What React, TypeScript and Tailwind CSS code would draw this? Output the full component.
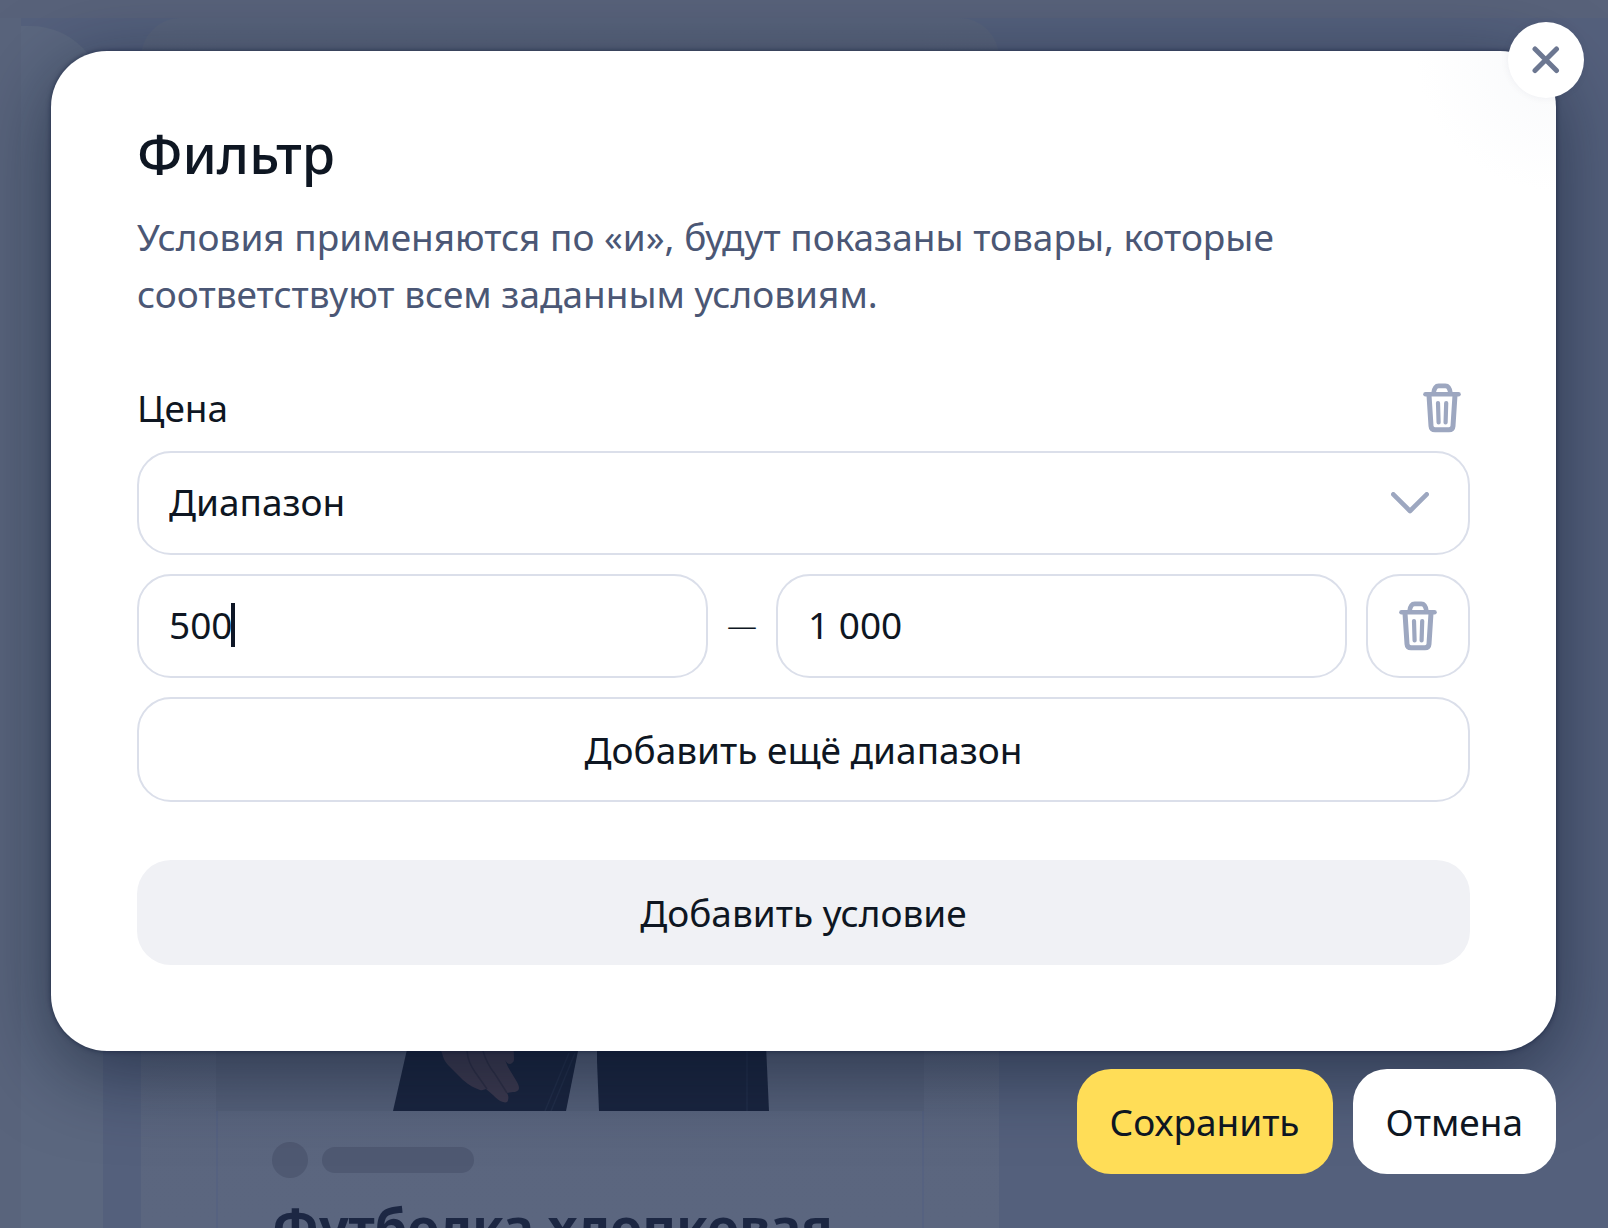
import { useId, useState } from 'react';
import { clsx } from 'clsx';

const fieldClass = 'h-[104px] rounded-[34px] border-2 border-[#dbdfea] bg-white';
const buttonClass = 'h-[105px] rounded-[34px] cursor-pointer text-[37px] leading-none';

function TrashIcon() {
  return (
    <svg
      className="h-[50px] w-[38px]"
      viewBox="0 0 38 50"
      fill="none"
      stroke="currentColor"
      strokeLinecap="round"
      strokeLinejoin="round"
      aria-hidden="true"
    >
      <path strokeWidth={4.6} d="M2.5 11.3h33" />
      <path strokeWidth={4.6} d="M10.500 10.500c.6-5.300 2.600-7.600 5.200-7.600h6.600c2.600 0 4.600 2.300 5.200 7.600" />
      <path strokeWidth={5} d="M6 12l2 31c.2 2.500 1.500 3.700 4 3.700h14c2.500 0 3.800-1.200 4-3.700l2-31" />
      <path strokeWidth={4.2} d="M15 20l.6 19.500M23.200 20l-.6 19.500" />
    </svg>
  );
}

function ChevronIcon() {
  return (
    <svg
      className="h-[22px] w-[38px]"
      viewBox="0 0 38 22"
      fill="none"
      stroke="currentColor"
      strokeWidth={4.6}
      strokeLinecap="round"
      strokeLinejoin="round"
      aria-hidden="true"
    >
      <path d="M2.300 2.300L19 19 35.700 2.300" />
    </svg>
  );
}

function CloseIcon() {
  return (
    <svg
      className="h-7 w-7"
      viewBox="0 0 28 28"
      fill="none"
      stroke="currentColor"
      strokeWidth={5}
      strokeLinecap="round"
      aria-hidden="true"
    >
      <path d="M3 3l21.500 21.500M24.500 3L3 24.500" />
    </svg>
  );
}

function ProductPhoto() {
  return (
    <svg className="h-[110px] w-[382px]" viewBox="0 0 382 110" aria-hidden="true">
      <path fill="#1a253f" d="M25 0L0 110h173l22-110z" />
      <path fill="#1a253f" d="M204 0v60l2 50h170l-5-110z" />
      <path stroke="#222e49" strokeWidth={1.5} fill="none" d="M182 52l-24 58M176 52l-24 58M354 50v60" />
      <path
        fill="#3d3a4f"
        d="M40 34l9 18c1 5 3 9 6 12l15 15c6 5 11 8 17 10c2 .5 4 0 6-1l7 6c3 3 6 6 10 7c3 1 5 0 5-2c1-3 0-5-1-7l6-1c4 0 6-2 6-4c0-2-1-4-2-6l-9-15l-3-7c2 4 5 5 7 3c2-1 2-3 2-5l-1-23z"
      />
      <path stroke="#2f2f45" strokeWidth={1.5} fill="none" d="M74 50c1 10 4 15 8 21l12 17M90 50c3 10 7 17 12 23l12 19" />
    </svg>
  );
}

function Catalog() {
  return (
    <div className="flex h-screen flex-col bg-[#58627a] pt-[18px]" aria-hidden="true">
      <div className="flex min-h-0 flex-1 bg-[#54607c]">
        <div className="w-[21px] bg-[#59647c]" />
        <div className="mt-2 w-[82px] rounded-tr-[72px] bg-[#5b677f]" />
        <div className="ml-[38px] flex w-[858px] flex-col rounded-t-[40px] bg-linear-to-b from-[#58637b] to-[#5b667f] px-[75px]">
          <div className="flex min-h-0 flex-1 items-end justify-start bg-linear-to-b from-[#58637b] to-[#56617a] pl-[177px]">
            <ProductPhoto />
          </div>
          <div className="h-[117px] overflow-hidden border-x-2 border-[#566280] px-[54px] pt-[31px]">
            <div className="flex items-center gap-[14px]">
              <div className="size-9 rounded-full bg-[#4f5972]" />
              <div className="h-[26px] w-[152px] rounded-full bg-[#4f5972]" />
            </div>
            <p className="mt-3 text-[52px] leading-[72px] font-bold whitespace-nowrap text-[#1c2743]">
              Футболка хлопковая
            </p>
          </div>
        </div>
      </div>
    </div>
  );
}

interface PriceInputProps {
  label: string;
  value: string;
  active?: boolean;
  onChange: (value: string) => void;
}

function PriceInput({ label, value, active, onChange }: PriceInputProps) {
  return (
    <label className={clsx(fieldClass, 'flex min-w-0 flex-1 cursor-text items-center px-[30px] pb-0.5')}>
      <input
        type="text"
        inputMode="numeric"
        aria-label={label}
        value={value}
        onChange={(e) => onChange(e.target.value)}
        className="field-sizing-content max-w-full text-[37px] outline-none"
      />
      {active && <span className="-ml-0.5 h-[44px] w-1 shrink-0 bg-[#0e1626]" />}
    </label>
  );
}

export default function App() {
  const [mode, setMode] = useState('range');
  const [from, setFrom] = useState('500');
  const [to, setTo] = useState('1 000');
  const selectId = useId();
  const titleId = useId();

  return (
    <div className="relative font-['Noto_Sans',sans-serif] text-[#0e1622]">
      <Catalog />

      {/* Modal layer */}
      <div className="absolute inset-0 pt-[51px] pr-[52px] pl-[51px]">
        <section
          role="dialog"
          aria-labelledby={titleId}
          className="relative rounded-[56px] bg-white bg-[radial-gradient(circle_at_top_right,#f8f9fb,#ffffff_140px)] p-[86px] shadow-[0_0_5px_rgba(8,18,48,0.6),0_20px_80px_rgba(10,20,40,0.55)]"
        >
          <button
            type="button"
            aria-label="Закрыть"
            className="absolute -top-[29px] -right-7 flex size-[76px] cursor-pointer items-center justify-center rounded-full bg-white text-[#6c7791] shadow-[0_0_8px_rgba(20,30,60,0.06)]"
          >
            <CloseIcon />
          </button>

          <h2 id={titleId} className="-mt-4 text-[54px] leading-[64px] font-medium">
            Фильтр
          </h2>
          <p className="mt-[23px] text-[37px] leading-[57px] text-[#4b5775]">
            Условия применяются по «и», будут показаны товары, которые соответствуют всем заданным условиям.
          </p>

          <div className="mt-[57px] flex items-center justify-between pr-[9px]">
            <label htmlFor={selectId} className="text-[37px] leading-[58px]">
              Цена
            </label>
            <button type="button" aria-label="Удалить условие" className="cursor-pointer text-[#9da7c0]">
              <TrashIcon />
            </button>
          </div>

          <div className="mt-[14px] grid items-center">
            <select
              id={selectId}
              value={mode}
              onChange={(e) => setMode(e.target.value)}
              className={clsx(
                fieldClass,
                'col-start-1 row-start-1 w-full appearance-none px-[30px] pb-0.5 text-[37px]'
              )}
            >
              <option value="range">Диапазон</option>
              <option value="exact">Точное значение</option>
            </select>
            <span className="pointer-events-none col-start-1 row-start-1 mr-[41px] justify-self-end text-[#9da7c0]">
              <ChevronIcon />
            </span>
          </div>

          <div className="mt-[19px] flex items-center gap-[19px]">
            <PriceInput label="Цена от" value={from} active onChange={setFrom} />
            <span className="pb-1 text-[30px] font-light">—</span>
            <PriceInput label="Цена до" value={to} onChange={setTo} />
            <button
              type="button"
              aria-label="Удалить диапазон"
              className={clsx(fieldClass, 'flex w-[104px] cursor-pointer items-center justify-center text-[#9da7c0]')}
            >
              <TrashIcon />
            </button>
          </div>

          <button type="button" className={clsx(buttonClass, 'mt-[19px] w-full border-2 border-[#dbdfea]')}>
            Добавить ещё диапазон
          </button>
          <button type="button" className={clsx(buttonClass, 'mt-[58px] w-full bg-[#f0f1f5]')}>
            Добавить условие
          </button>
        </section>

        <div className="relative mt-[18px] flex justify-end gap-[20px]">
          <button type="button" className={clsx(buttonClass, 'bg-[#ffdd57] px-[33px]')}>
            Сохранить
          </button>
          <button type="button" className={clsx(buttonClass, 'bg-white px-[33px]')}>
            Отмена
          </button>
        </div>
      </div>
    </div>
  );
}
